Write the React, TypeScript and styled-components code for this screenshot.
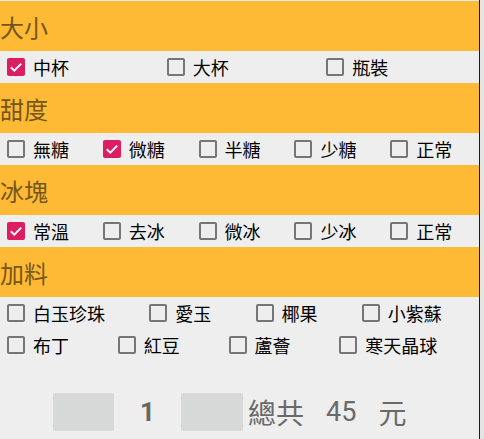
import styled, { createGlobalStyle } from 'styled-components'

const GlobalStyle = createGlobalStyle`
  html, body {
    margin: 0;
    padding: 0;
    background: #e4e4e4;
  }
  body {
    font-family: Roboto, "Noto Sans CJK TC", sans-serif;
  }
`

const Screen = styled.div`
  width: 480px;
  height: 439px;
  box-sizing: border-box;
  padding-top: 1px;
  background: #eeeeee;
  border-right: 1px solid #1c1c1c;
`

const Header = styled.div`
  height: 50px;
  display: flex;
  align-items: center;
  background: #ffba35;
  color: #755618;
  font-family: "Noto Sans CJK TC", sans-serif;
  font-size: 24px;
`

const Row = styled.div`
  height: 32px;
  display: flex;
  align-items: center;
`

const Option = styled.label`
  flex: 1 1 auto;
  display: flex;
  align-items: center;
  gap: 8px;
  padding-left: 7px;
  font-family: "Noto Sans CJK TC", sans-serif;
  font-size: 18px;
  color: #000000;
  white-space: nowrap;
`

const Box = styled.span<{ $on: boolean }>`
  width: 18px;
  height: 18px;
  box-sizing: border-box;
  border-radius: 2px;
  border: ${(p) => (p.$on ? '0' : '2px solid #767676')};
  background: ${(p) => (p.$on ? '#dc1d62' : 'transparent')};
  display: flex;
`

const Footer = styled.div`
  display: flex;
  align-items: center;
  padding: 31px 0 0 53px;
`

const Stepper = styled.button<{ $w: number }>`
  width: ${(p) => p.$w}px;
  height: 38px;
  padding: 0;
  border: 0;
  border-radius: 2px;
  background: #d7d8d8;
`

const Count = styled.span`
  width: 67px;
  text-align: center;
  font-family: Roboto, sans-serif;
  font-weight: bold;
  font-size: 26px;
  color: #666666;
`

const Label = styled.span<{ $ml: number }>`
  margin-left: ${(p) => p.$ml}px;
  font-family: Roboto, "Noto Sans CJK TC", sans-serif;
  font-size: 28px;
  color: #6a6a6a;
`

const Price = styled.span`
  margin-left: 22px;
  font-family: Roboto, sans-serif;
  font-size: 27px;
  color: #6a6a6a;
`

type Section = { title: string; rows: { name: string; on?: boolean }[][] }

const sections: Section[] = [
  { title: '大小', rows: [[{ name: '中杯', on: true }, { name: '大杯' }, { name: '瓶裝' }]] },
  {
    title: '甜度',
    rows: [[{ name: '無糖' }, { name: '微糖', on: true }, { name: '半糖' }, { name: '少糖' }, { name: '正常' }]],
  },
  {
    title: '冰塊',
    rows: [[{ name: '常溫', on: true }, { name: '去冰' }, { name: '微冰' }, { name: '少冰' }, { name: '正常' }]],
  },
  {
    title: '加料',
    rows: [
      [{ name: '白玉珍珠' }, { name: '愛玉' }, { name: '椰果' }, { name: '小紫蘇' }],
      [{ name: '布丁' }, { name: '紅豆' }, { name: '蘆薈' }, { name: '寒天晶球' }],
    ],
  },
]

function Check({ on }: { on: boolean }) {
  return (
    <Box $on={on}>
      {on && (
        <svg width="18" height="18" viewBox="0 0 18 18">
          <polyline points="3.8,9.2 7.3,12.6 14.2,5.6" fill="none" stroke="#fff" strokeWidth="2" />
        </svg>
      )}
    </Box>
  )
}

export default function App() {
  return (
    <Screen>
      <GlobalStyle />
      {sections.map((s) => (
        <div key={s.title}>
          <Header>{s.title}</Header>
          {s.rows.map((row, i) => (
            <Row key={i}>
              {row.map((o) => (
                <Option key={o.name}>
                  <Check on={!!o.on} />
                  {o.name}
                </Option>
              ))}
            </Row>
          ))}
        </div>
      ))}
      <Footer>
        <Stepper $w={61} />
        <Count>1</Count>
        <Stepper $w={62} />
        <Label $ml={5}>總共</Label>
        <Price>45</Price>
        <Label $ml={22}>元</Label>
      </Footer>
    </Screen>
  )
}
